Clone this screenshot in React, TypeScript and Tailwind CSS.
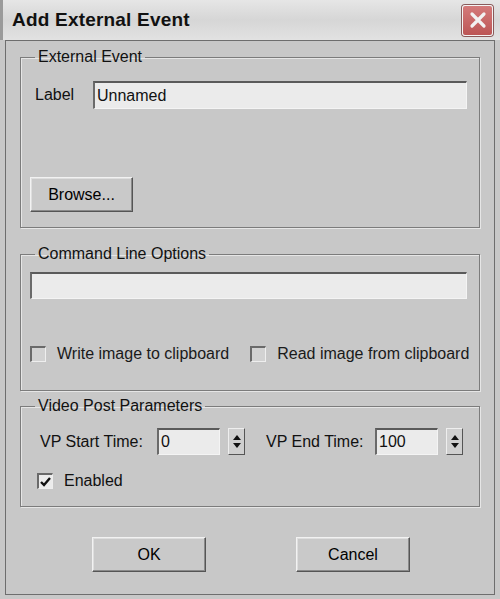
const font = { fontFamily: '"Liberation Sans", Arial, sans-serif' };

function Sunken({ className = "", children }: { className?: string; children?: React.ReactNode }) {
  return (
    <div
      className={`border-t-2 border-l-2 border-b border-r border-t-[#5a5a5a] border-l-[#6a6a6a] border-b-[#f4f4f4] border-r-[#f4f4f4] bg-[#ebebeb] ${className}`}
    >
      {children}
    </div>
  );
}

function Button({ label, className = "" }: { label: string; className?: string }) {
  return (
    <div
      className={`flex items-center justify-center border border-t-[#f2f2f2] border-l-[#f2f2f2] border-b-[#555] border-r-[#555] shadow-[inset_-1px_-1px_0_#8a8a8a,inset_1px_1px_0_#dedede] bg-[#c9c9c9] text-[16px] text-black ${className}`}
    >
      {label}
    </div>
  );
}

function Spinner() {
  return (
    <div className="flex h-[27px] w-[17px] flex-col items-center justify-center gap-[3px] border border-t-[#eee] border-l-[#eee] border-b-[#555] border-r-[#555] bg-[#cfcfcf]">
      <svg width="8" height="5" viewBox="0 0 8 5">
        <path d="M4 0 L8 5 L0 5 Z" fill="#111" />
      </svg>
      <svg width="8" height="5" viewBox="0 0 8 5">
        <path d="M0 0 L8 0 L4 5 Z" fill="#111" />
      </svg>
    </div>
  );
}

function Checkbox({ checked = false }: { checked?: boolean }) {
  return (
    <div
      className={`flex h-[16px] w-[16px] items-center justify-center border-t-2 border-l-2 border-b border-r border-t-[#6a6a6a] border-l-[#6a6a6a] border-b-[#eee] border-r-[#eee] ${checked ? "bg-[#ececec]" : "bg-[#d2d2d2]"}`}
    >
      {checked && (
        <svg width="11" height="10" viewBox="0 0 11 10">
          <path d="M1 5 L4 8 L10 1" stroke="#111" strokeWidth="2.4" fill="none" />
        </svg>
      )}
    </div>
  );
}

function Group({ title, className = "", children }: { title: string; className?: string; children: React.ReactNode }) {
  return (
    <fieldset
      className={`border border-[#7c7c7c] shadow-[1px_1px_0_#e6e6e6,inset_1px_1px_0_#e6e6e6] ${className}`}
    >
      <legend className="ml-[14px] px-[3px] text-[16px] leading-[18px] text-[#111]">{title}</legend>
      {children}
    </fieldset>
  );
}

export default function App() {
  return (
    <div
      className="flex h-[599px] w-[500px] flex-col overflow-hidden bg-[#c8c8c8] text-[#111]"
      style={font}
    >
      <div className="flex h-[40px] shrink-0 items-center justify-between border-l-[3px] border-l-[#9a9a9a] bg-gradient-to-b from-[#e6e6e6] via-[#d6d6d6] to-[#e2e2e2] pl-[9px] pr-[7px]">
        <span className="text-[19px] font-bold tracking-[0.2px] text-[#111]">Add External Event</span>
        <div className="flex h-[31px] w-[31px] items-center justify-center rounded-[3px] border border-[#f4f4f4] bg-gradient-to-b from-[#d47a7a] to-[#bc5656] shadow-[0_0_0_1px_#8a5a5a]">
          <svg width="18" height="18" viewBox="0 0 18 18">
            <path d="M3 3 L15 15 M15 3 L3 15" stroke="#f2f2f2" strokeWidth="3.2" strokeLinecap="round" />
          </svg>
        </div>
      </div>

      <div className="mx-[5px] mb-[4px] flex flex-1 flex-col border border-[#6e6e6e] px-[14px] pt-[7px]">
        <Group title="External Event" className="h-[180px]">
          <div className="mt-[15px] flex items-center pl-[14px] pr-[12px]">
            <span className="w-[58px] text-[16px]">Label</span>
            <Sunken className="flex h-[28px] flex-1 items-center pl-[2px] text-[16px]">Unnamed</Sunken>
          </div>
          <Button label="Browse..." className="mt-[68px] ml-[9px] h-[35px] w-[103px]" />
        </Group>

        <Group title="Command Line Options" className="mt-[17px] h-[146px]">
          <Sunken className="mt-[9px] ml-[9px] mr-[12px] h-[27px]" />
          <div className="mt-[43px] flex items-center pl-[9px]">
            <Checkbox />
            <span className="ml-[11px] text-[16px] text-[#1a1a1a]">Write image to clipboard</span>
            <div className="ml-[21px]">
              <Checkbox />
            </div>
            <span className="ml-[11px] text-[16px] text-[#1a1a1a]">Read image from clipboard</span>
          </div>
        </Group>

        <Group title="Video Post Parameters" className="mt-[6px] h-[110px]">
          <div className="mt-[13px] flex items-center pl-[19px]">
            <span className="w-[117px] text-[16px]">VP Start Time:</span>
            <Sunken className="flex h-[27px] w-[63px] items-center pl-[2px] text-[16px]">0</Sunken>
            <div className="ml-[8px]">
              <Spinner />
            </div>
            <span className="ml-[21px] w-[109px] text-[16px]">VP End Time:</span>
            <Sunken className="flex h-[27px] w-[63px] items-center pl-[2px] text-[16px]">100</Sunken>
            <div className="ml-[8px]">
              <Spinner />
            </div>
          </div>
          <div className="mt-[14px] flex items-center pl-[16px]">
            <Checkbox checked />
            <span className="ml-[11px] text-[16px]">Enabled</span>
          </div>
        </Group>

        <div className="mt-[30px] flex pl-[72px]">
          <Button label="OK" className="h-[35px] w-[114px]" />
          <Button label="Cancel" className="ml-[90px] h-[35px] w-[114px]" />
        </div>
      </div>
    </div>
  );
}
